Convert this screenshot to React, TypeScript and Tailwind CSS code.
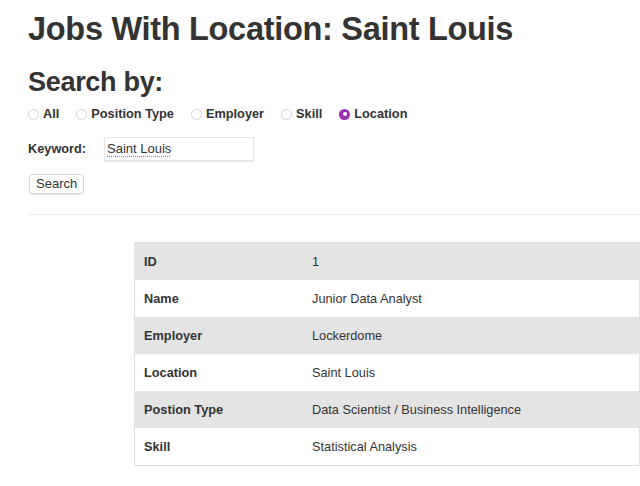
import React from "react";

const rows: [string, string][] = [
  ["ID", "1"],
  ["Name", "Junior Data Analyst"],
  ["Employer", "Lockerdome"],
  ["Location", "Saint Louis"],
  ["Postion Type", "Data Scientist / Business Intelligence"],
  ["Skill", "Statistical Analysis"],
];

const radios = ["All", "Position Type", "Employer", "Skill", "Location"];

export default function App() {
  return (
    <div
      className="w-[640px] h-[486px] overflow-hidden bg-white text-[#333]"
      style={{ fontFamily: '"Liberation Sans", Arial, sans-serif' }}
    >
      <div className="pl-[28px] pt-[9px]">
        <h1 className="text-[32.5px] leading-[40px] font-bold tracking-[-0.3px] whitespace-nowrap">
          Jobs With Location: Saint Louis
        </h1>
        <h2 className="mt-[16px] text-[27px] leading-[34px] font-bold tracking-[-0.3px]">
          Search by:
        </h2>
        <div className="mt-[6px] flex items-center h-[18px] text-[12.75px] font-bold">
          {radios.map((r, i) => (
            <div key={r} className={"flex items-center " + (i > 0 ? "ml-[17px]" : "")}>
              {r === "Location" ? (
                <span className="w-[11px] h-[11px] rounded-full bg-[#9c2fb3] flex items-center justify-center">
                  <span className="w-[4px] h-[4px] rounded-full bg-white" />
                </span>
              ) : (
                <span className="w-[11px] h-[11px] rounded-full border border-[#d4d4d4] bg-white" />
              )}
              <span className="ml-[4px]">{r}</span>
            </div>
          ))}
        </div>
        <div className="mt-[14px] flex items-center">
          <span className="w-[76px] text-[12.75px] font-bold">Keyword:</span>
          <div className="w-[150px] h-[24px] border border-[#e3e3e3] shadow-[0_1px_1px_rgba(0,0,0,0.08)] flex items-center pl-[2px] text-[13px]">
            <span className="underline decoration-dotted decoration-[#6a9be8] underline-offset-[3px]">
              Saint Louis
            </span>
          </div>
        </div>
        <div className="mt-[10px]">
          <button className="h-[20px] px-[6px] ml-[1px] border border-[#d6d6d6] rounded-[4px] bg-white text-[13px] leading-[18px] shadow-[0_1px_1px_rgba(0,0,0,0.1)]">
            Search
          </button>
        </div>
        <div className="mt-[19px] h-px bg-[#ececec]" />
        <div className="mt-[27px] ml-[106px] border border-[#e2e2e2] text-[12.75px]">
          {rows.map(([k, v], i) => (
            <div
              key={k}
              className={
                "flex items-center h-[37px] " +
                (i % 2 === 0 ? "bg-[#e4e4e4]" : "bg-white")
              }
            >
              <span className="w-[177px] pl-[9px] font-bold">{k}</span>
              <span>{v}</span>
            </div>
          ))}
        </div>
      </div>
    </div>
  );
}
